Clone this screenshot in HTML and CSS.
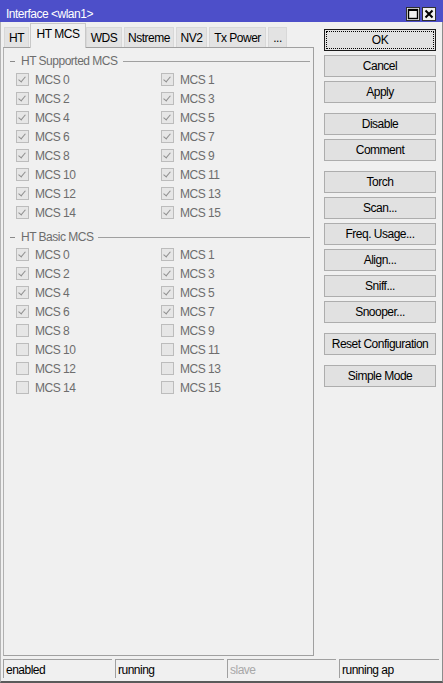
FILE: index.html
```html
<!DOCTYPE html>
<html>
<head>
<meta charset="utf-8">
<link rel="stylesheet" href="styles.css">
</head>
<body>
<div class="window">
  <div class="titlebar">
    <span class="title">Interface &lt;wlan1&gt;</span>
    <div class="ctrls">
      <span class="ctrl"><svg width="12" height="12" viewBox="0 0 12 12"><rect x="1.5" y="1.5" width="9" height="9" fill="none" stroke="#000" stroke-width="1.4"/><line x1="1.5" y1="2.2" x2="10.5" y2="2.2" stroke="#000" stroke-width="1.6"/></svg></span>
      <span class="ctrl"><svg width="12" height="12" viewBox="0 0 12 12"><path d="M2.5 2.5 L9.5 9.5 M9.5 2.5 L2.5 9.5" stroke="#000" stroke-width="2"/></svg></span>
    </div>
  </div>
  <div class="main">
    <div class="left">
      <div class="tabs">
        <div class="tab w-ht">HT</div>
        <div class="tab sel w-mcs">HT MCS</div>
        <div class="tab w-wds">WDS</div>
        <div class="tab w-ns">Nstreme</div>
        <div class="tab w-nv">NV2</div>
        <div class="tab w-tx">Tx Power</div>
        <div class="tab w-more">...</div>
      </div>
      <div class="panel">
        <div class="group">
          <div class="ghead"><span class="dash"></span><span class="gtitle">HT Supported MCS</span><span class="gline"></span></div>
          <div class="grid">
            <div class="cb"><span class="box on"></span>MCS 0</div><div class="cb"><span class="box on"></span>MCS 1</div>
            <div class="cb"><span class="box on"></span>MCS 2</div><div class="cb"><span class="box on"></span>MCS 3</div>
            <div class="cb"><span class="box on"></span>MCS 4</div><div class="cb"><span class="box on"></span>MCS 5</div>
            <div class="cb"><span class="box on"></span>MCS 6</div><div class="cb"><span class="box on"></span>MCS 7</div>
            <div class="cb"><span class="box on"></span>MCS 8</div><div class="cb"><span class="box on"></span>MCS 9</div>
            <div class="cb"><span class="box on"></span>MCS 10</div><div class="cb"><span class="box on"></span>MCS 11</div>
            <div class="cb"><span class="box on"></span>MCS 12</div><div class="cb"><span class="box on"></span>MCS 13</div>
            <div class="cb"><span class="box on"></span>MCS 14</div><div class="cb"><span class="box on"></span>MCS 15</div>
          </div>
        </div>
        <div class="group g2">
          <div class="ghead"><span class="dash"></span><span class="gtitle">HT Basic MCS</span><span class="gline"></span></div>
          <div class="grid">
            <div class="cb"><span class="box on"></span>MCS 0</div><div class="cb"><span class="box on"></span>MCS 1</div>
            <div class="cb"><span class="box on"></span>MCS 2</div><div class="cb"><span class="box on"></span>MCS 3</div>
            <div class="cb"><span class="box on"></span>MCS 4</div><div class="cb"><span class="box on"></span>MCS 5</div>
            <div class="cb"><span class="box on"></span>MCS 6</div><div class="cb"><span class="box on"></span>MCS 7</div>
            <div class="cb"><span class="box"></span>MCS 8</div><div class="cb"><span class="box"></span>MCS 9</div>
            <div class="cb"><span class="box"></span>MCS 10</div><div class="cb"><span class="box"></span>MCS 11</div>
            <div class="cb"><span class="box"></span>MCS 12</div><div class="cb"><span class="box"></span>MCS 13</div>
            <div class="cb"><span class="box"></span>MCS 14</div><div class="cb"><span class="box"></span>MCS 15</div>
          </div>
        </div>
      </div>
    </div>
    <div class="right">
      <div class="btngroup">
        <div class="btn ok"><span class="focus">OK</span></div>
        <div class="btn">Cancel</div>
        <div class="btn">Apply</div>
      </div>
      <div class="btngroup">
        <div class="btn">Disable</div>
        <div class="btn">Comment</div>
      </div>
      <div class="btngroup">
        <div class="btn">Torch</div>
        <div class="btn">Scan...</div>
        <div class="btn">Freq. Usage...</div>
        <div class="btn">Align...</div>
        <div class="btn">Sniff...</div>
        <div class="btn">Snooper...</div>
      </div>
      <div class="btngroup">
        <div class="btn">Reset Configuration</div>
      </div>
      <div class="btngroup">
        <div class="btn">Simple Mode</div>
      </div>
    </div>
  </div>
  <div class="status">
    <div class="field f1">enabled</div>
    <div class="field f2">running</div>
    <div class="field f3 dim">slave</div>
    <div class="field f4">running ap</div>
  </div>
</div>
</body>
</html>
```
FILE: styles.css
```css
* { box-sizing: border-box; }
html, body { margin: 0; padding: 0; }
body {
  width: 443px;
  height: 683px;
  background: #f0f0f0;
  font-family: "Liberation Sans", Arial, sans-serif;
  font-size: 12px;
  letter-spacing: -0.5px;
  color: #000;
  overflow: hidden;
}
.window {
  width: 443px;
  height: 683px;
  display: flex;
  flex-direction: column;
  border-left: 1px solid #b4b4b4;
  border-right: 1px solid #8c8c8c;
  border-bottom: 2px solid #5a5a5a;
  background: #f0f0f0;
}
.titlebar {
  height: 23px;
  margin: 0 -1px;
  background: #4d4fc9;
  color: #fff;
  display: flex;
  align-items: center;
  padding: 5px 7px 0 6px;
  font-size: 12px;
}
.title { flex: 1; }
.ctrls { display: flex; gap: 2px; margin-top: 1px; }
.ctrl {
  width: 14px;
  height: 14px;
  background: #f0f0f0;
  border: 1px solid #303030;
  display: flex;
  align-items: center;
  justify-content: center;
}
.main {
  flex: 1;
  display: flex;
  padding-left: 2px;
}
.left {
  width: 311px;
  display: flex;
  flex-direction: column;
}
.tabs {
  height: 25px;
  display: flex;
  align-items: flex-end;
  padding-left: 1px;
  position: relative;
  z-index: 2;
}
.tab {
  height: 20px;
  background: #e3e3e3;
  border: 1px solid #d8d8d8;
  border-bottom: none;
  display: flex;
  align-items: center;
  justify-content: center;
  margin-right: 2px;
  color: #000;
}
.tab.sel {
  height: 25px;
  background: #f0f0f0;
  border: 1px solid #c8c8c8;
  border-bottom: none;
  margin-right: 0;
  margin-bottom: -1px;
  padding-bottom: 4px;
}
.w-ht { width: 25px; margin-right: 1px; }
.w-mcs { width: 56px; }
.w-wds { width: 36px; }
.w-ns { width: 50px; }
.w-nv { width: 31px; }
.w-tx { width: 57px; }
.w-more { width: 19px; }
.panel {
  height: 609px;
  border: 1px solid #a0a0a0;
  border-left-color: #b0b0b0;
  padding: 6px 0 0 4px;
  color: #6d6d6d;
}
.ghead {
  height: 14px;
  display: flex;
  align-items: center;
  width: 302px;
}
.dash {
  width: 5px;
  height: 1px;
  background: #8a8a8a;
  margin-left: 2px;
}
.gtitle { margin: 0 5px 0 6px; }
.gline {
  flex: 1;
  height: 1px;
  background: #a0a0a0;
}
.grid {
  display: grid;
  grid-template-columns: 145px 145px;
  grid-auto-rows: 19px;
  padding-left: 8px;
  margin-top: 2px;
}
.g2 { margin-top: 8px; }
.g2 .grid { margin-top: 1px; }
.cb {
  display: flex;
  align-items: center;
  color: #6d6d6d;
}
.box {
  width: 13px;
  height: 13px;
  border: 1px solid #bcbcbc;
  background: #e6e6e6;
  margin-right: 6px;
  position: relative;
}
.box.on::after {
  content: "";
  position: absolute;
  left: 3px;
  top: 1px;
  width: 3px;
  height: 6px;
  border-right: 1.5px solid #8e8e8e;
  border-bottom: 1.5px solid #8e8e8e;
  transform: rotate(40deg);
}
.right {
  margin-left: 10px;
  width: 112px;
  padding-top: 7px;
  display: flex;
  flex-direction: column;
  gap: 10px;
}
.btngroup {
  display: flex;
  flex-direction: column;
  gap: 4px;
}
.btn {
  height: 22px;
  border: 1px solid #adadad;
  background: #e1e1e1;
  display: flex;
  align-items: center;
  justify-content: center;
  color: #000;
}
.btn.ok {
  border: 1px solid #1a1a1a;
  padding: 1px;
}
.focus {
  flex: 1;
  align-self: stretch;
  border: 1px dotted #000;
  display: flex;
  align-items: center;
  justify-content: center;
}
.status {
  height: 26px;
  display: flex;
  padding: 3px 0 3px 2px;
  gap: 3px;
}
.field {
  height: 19px;
  border-top: 1px solid #a0a0a0;
  border-left: 1px solid #a0a0a0;
  padding-left: 2px;
  display: flex;
  align-items: center;
  padding-top: 2px;
}
.f1 { width: 109px; }
.f2 { width: 109px; }
.f3 { width: 109px; }
.f4 { width: 100px; }
.dim { color: #a8a8a8; }
```
